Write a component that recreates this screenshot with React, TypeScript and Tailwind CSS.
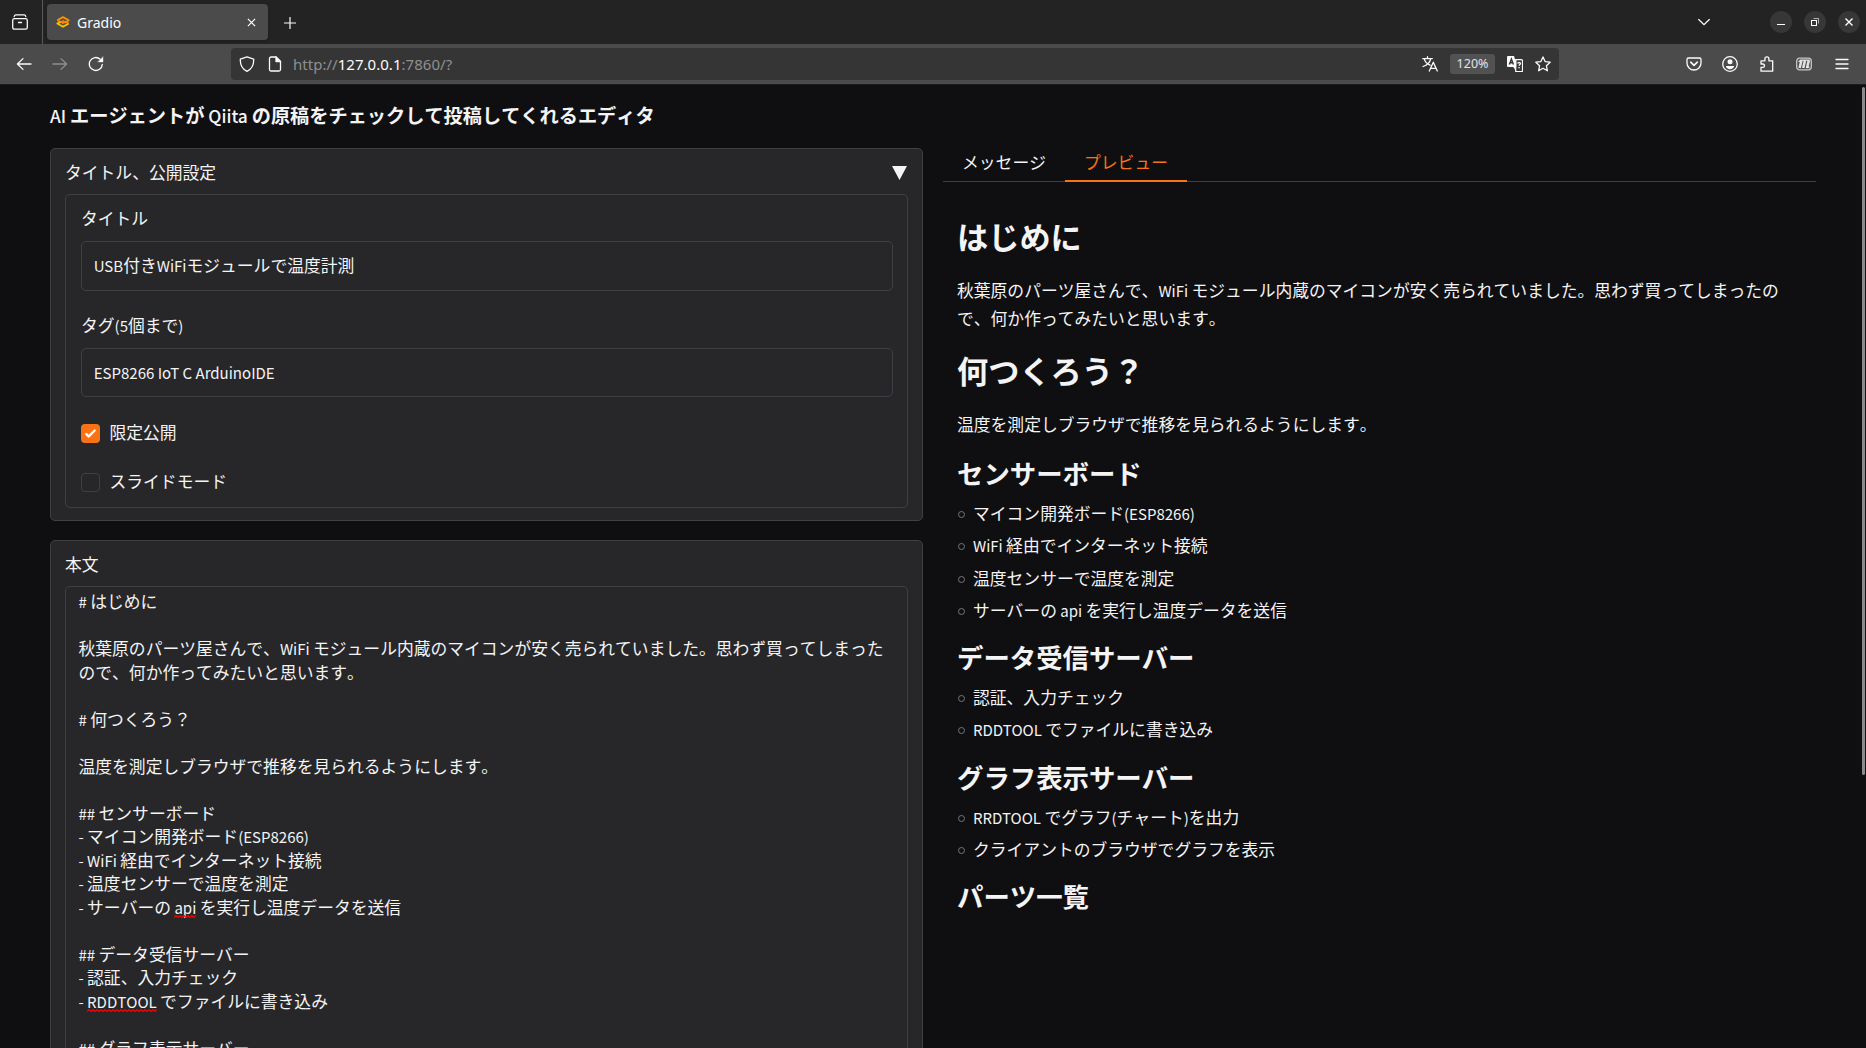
import React from "react";

type IconProps = { children: React.ReactNode; className?: string };

function Icon({ children, className = "" }: IconProps) {
  return (
    <svg
      viewBox="0 0 16 16"
      className={"size-4 shrink-0 " + className}
      fill="none"
      stroke="currentColor"
      strokeWidth="1.3"
      strokeLinecap="round"
      strokeLinejoin="round"
    >
      {children}
    </svg>
  );
}

/* Sets Latin runs slightly smaller than the Japanese text around them. */
function Mixed({ text, latin = "text-[0.895em]" }: { text: string; latin?: string }) {
  return (
    <>
      {text.split(/([ -~]+)/).map((run, i) =>
        i % 2 === 1 ? (
          <span key={i} className={"leading-none [font-kerning:normal] " + latin}>
            {run}
          </span>
        ) : (
          run
        ),
      )}
    </>
  );
}

function GradioLogo() {
  return (
    <svg viewBox="0 0 14 12" className="h-3 w-3.5 shrink-0" fill="none" strokeWidth="1.8" strokeLinejoin="round">
      <path d="M1.3 4.300 7 1.100l5.700 3.200L8.500 6.700" stroke="#ff9100" />
      <path d="M1.300 4.300 5 6.300 8.200 4.500" stroke="#ff7a00" />
      <path d="M12.700 7.500 7 10.800 1.300 7.500 4.800 5.700" stroke="#ffc000" />
      <path d="M12.700 7.500 9.400 5.700 6 7.400" stroke="#ff8a00" />
    </svg>
  );
}

function WindowButton({ children }: { children: React.ReactNode }) {
  return (
    <div className="flex size-[22px] items-center justify-center rounded-full bg-[#373737] text-white">
      <svg viewBox="0 0 10 10" className="size-2.5" fill="none" stroke="currentColor">
        {children}
      </svg>
    </div>
  );
}

function TabStrip() {
  return (
    <div className="flex h-11 items-center bg-[#232323] text-[#fbfbfe]">
      <div className="flex h-full w-[43px] items-center border-r border-[#5a5a5a] pl-3">
        <Icon>
          <path d="M2.200 2.500C2.400 1.200 3 .800 4 .800h8c1 0 1.600.4 1.800 1.700" />
          <rect x=".7" y="4.700" width="14.600" height="10.500" rx="1.800" />
          <path d="M6.500 8.500h3" />
        </Icon>
      </div>
      <div className="ml-1 flex h-9 w-[221px] items-center rounded bg-[#4b4b4b] pr-2.5 pl-[9px] shadow">
        <GradioLogo />
        <span className="ml-[7px] flex-1 text-[14px]">Gradio</span>
        <svg viewBox="0 0 10 10" className="mr-0.5 size-[9px]" stroke="currentColor" strokeWidth="1.400">
          <path d="M1 1l8 8M9 1l-8 8" />
        </svg>
      </div>
      <svg viewBox="0 0 12 12" className="ml-4 size-3 translate-y-px" stroke="currentColor" strokeWidth="1.200">
        <path d="M6 0v12M0 6h12" />
      </svg>
      <div className="flex-1" />
      <svg viewBox="0 0 12 8" className="mr-[60px] h-2 w-3" fill="none" stroke="currentColor" strokeWidth="1.300">
        <path d="M.4 1.200 6 6.600l5.600-5.400" />
      </svg>
      <div className="mr-[6px] flex gap-3">
        <WindowButton>
          <path d="M1 7.500h8" />
        </WindowButton>
        <WindowButton>
          <rect x="1.500" y="3.500" width="5" height="5" />
          <path d="M3.500 1.500h5v5" strokeOpacity=".6" />
        </WindowButton>
        <WindowButton>
          <path d="M1.500 1.500l7 7M8.500 1.500l-7 7" strokeWidth="1.400" />
        </WindowButton>
      </div>
    </div>
  );
}

function Toolbar() {
  return (
    <div className="flex h-[41px] items-center border-b border-[#1c1c1e] bg-[#4b4b4b] text-[#fbfbfe]">
      <Icon className="ml-4">
        <path d="M15 8H1.600M7 2.600 1.400 8 7 13.400" />
      </Icon>
      <Icon className="ml-5 text-[#8e8e90]">
        <path d="M1 8h13.400M9 2.600 14.600 8 9 13.400" />
      </Icon>
      <Icon className="ml-5">
        <path d="M14.300 8.400A6.500 6.500 0 1 1 12.200 3.200" />
        <path d="M15 1v4.900h-4.900z" fill="currentColor" strokeWidth=".4" />
      </Icon>
      <div className="ml-[127px] flex h-8 w-[1328px] items-center rounded bg-[#353535] px-2">
        <Icon>
          <path d="M8 .8 14.700 3.200C14.900 8.600 12.600 13 8 15.300 3.400 13 1.100 8.600 1.300 3.200z" />
        </Icon>
        <Icon className="ml-3">
          <path d="M4 1h5l4.500 4.500V13.500a1.500 1.500 0 0 1-1.500 1.500H4a1.500 1.500 0 0 1-1.500-1.500v-11A1.500 1.500 0 0 1 4 1z" />
          <path d="M9 1v4.500h4.500z" fill="currentColor" />
        </Icon>
        <span className="ml-[10px] flex-1 text-[15px] tracking-[0.030px] text-[#8f8f90]">
          http://<span className="text-[#fbfbfe]">127.0.0.1</span>:7860/?
        </span>
        <Icon>
          <path d="M.7 2.600h9.600M5.500.7v1.900M2.200 2.800c.8 3 3.300 5.200 5.800 6.400M8.700 2.800C8 6 5 9 1 10.500" />
          <path d="M7.300 15 11.300 6.200 15.300 15M8.700 12.300h5.200" />
        </Icon>
        <span className="ml-3 flex h-5 w-[45px] items-center justify-center rounded-[3px] bg-[#525252] text-[12.500px] text-[#e4e4e6]">
          120%
        </span>
        <svg viewBox="0 0 16 16" className="ml-3 size-4" fill="none" stroke="currentColor" strokeWidth="1.200">
          <path d="M1 0h6l1 3.300h1.500v8.200H6.500V11H1a1 1 0 0 1-1-1V1a1 1 0 0 1 1-1z" fill="currentColor" stroke="none" />
          <path d="M2.400 8.500 4.400 3l2 5.500M3 6.700h2.800" stroke="#353535" strokeWidth="1.400" />
          <path d="M8.500 3.700h6a1 1 0 0 1 1 1v10a1 1 0 0 1-1 1H8.700V11.500" />
          <path d="M6.300 10.500 8.700 15.300V10z" fill="currentColor" stroke="none" />
          <path d="M10.800 7.500c0-1.300 2.600-1.300 2.600 0 0 1-1.300 1-1.300 2.300M12.100 11v1.200" strokeWidth="1.400" />
        </svg>
        <Icon className="ml-3">
          <path d="M8 .9l2.100 4.700 5.100.6-3.800 3.500 1 5.100L8 12.300l-4.400 2.500 1-5.100L.8 6.200l5.100-.6z" />
        </Icon>
      </div>
      <div className="flex-1" />
      <div className="mr-4 flex items-center gap-5">
        <Icon>
          <path d="M2.500 2h11A1.500 1.500 0 0 1 15 3.500V7A7 7 0 0 1 1 7V3.500A1.500 1.500 0 0 1 2.500 2z" />
          <path d="M4.700 6.200 8 9.300l3.300-3.100" strokeWidth="1.600" />
        </Icon>
        <Icon>
          <circle cx="8" cy="8" r="7.300" />
          <circle cx="8" cy="5.800" r="2.500" fill="currentColor" stroke="none" />
          <path d="M3.800 10h8.400c-.3 2-2 3.200-4.200 3.200S4.100 12 3.800 10z" fill="currentColor" stroke="none" />
        </Icon>
        <Icon className="translate-x-px">
          <path d="M2 15.200V11.400h1.800a1.700 1.700 0 0 0 0-3.400H2V4.800h3.900V2.900a2 2 0 0 1 4 0v1.900h3.800v10.400z" />
        </Icon>
        <Icon className="ml-0.5">
          <rect x=".7" y="2.200" width="14.600" height="11.600" rx="3" strokeOpacity=".7" />
          <path
            d="M3.600 12 5.400 4.500M7.200 12 9 4.500M11 12 12.800 4.500"
            strokeWidth="2.600"
            strokeLinecap="butt"
            strokeOpacity=".85"
          />
          <path d="M2.900 5.400 4.600 4.200h8.600M10.800 11.800l2.400-.8" strokeWidth="1.200" strokeOpacity=".9" />
        </Icon>
        <Icon className="ml-0.5">
          <path d="M2 3.500h12M2 8h12M2 12.500h12" />
        </Icon>
      </div>
    </div>
  );
}

function Field({ label, value }: { label: string; value: string }) {
  return (
    <div className="flex flex-col gap-[11px]">
      <div className="h-6 leading-6">
        <Mixed text={label} />
      </div>
      <div className="h-[49.500px] rounded-[5px] border border-[#3f3f46] px-[11.700px] leading-[46px]">
        <Mixed text={value} />
      </div>
    </div>
  );
}

function Check({ label, checked }: { label: string; checked?: boolean }) {
  return (
    <div className="flex h-6 items-center gap-[9.500px]">
      {checked ? (
        <span className="flex size-[19px] items-center justify-center rounded bg-[#f97316]">
          <svg viewBox="0 0 16 16" className="size-[19px]" fill="white">
            <path d="M12.207 4.793a1 1 0 010 1.414l-5 5a1 1 0 01-1.414 0l-2-2a1 1 0 011.414-1.414L6.500 9.086l4.293-4.293a1 1 0 011.414 0z" />
          </svg>
        </span>
      ) : (
        <span className="size-[19px] rounded border border-[#3f3f46]" />
      )}
      <span>{label}</span>
    </div>
  );
}

/* A word with the spell checker's red zigzag laid under it. */
function Misspelt({ word }: { word: string }) {
  const points = Array.from({ length: 60 }, (_, i) => `${i * 2},${i % 2 === 0 ? 2.5 : 0.5}`).join(" ");
  return (
    <span className="relative inline-block text-[0.895em] leading-none">
      {word}
      <svg className="absolute inset-x-0 bottom-[-3px] h-[3px] w-full overflow-hidden" fill="none">
        <polyline points={points} stroke="#ff0000" strokeWidth="1.1" />
      </svg>
    </span>
  );
}

const panel = "rounded-[5px] border border-[#3f3f46] bg-[#27272a]";

function SettingsPanel() {
  return (
    <section className={panel + " h-[373px] px-3.5 pt-3"}>
      <div className="flex h-6 items-center justify-between">
        <span>タイトル、公開設定</span>
        <svg viewBox="0 0 15 14" className="mr-px h-3.5 w-[15px]" fill="#f4f4f5">
          <path d="M0 0h15L7.500 14z" />
        </svg>
      </div>
      <div className="mt-[9px] flex h-[314px] flex-col rounded-[5px] border border-[#3f3f46] pt-[11px] pr-[14px] pl-[15px]">
        <Field label="タイトル" value="USB付きWiFiモジュールで温度計測" />
        <div className="h-[22px]" />
        <Field label="タグ(5個まで)" value="ESP8266 IoT C ArduinoIDE" />
        <div className="mt-6 flex flex-col gap-[25px]">
          <Check label="限定公開" checked />
          <Check label="スライドモード" />
        </div>
      </div>
    </section>
  );
}

function BodyPanel() {
  return (
    <section className={panel + " mt-[19px] h-[700px] px-3.5 pt-[11px]"}>
      <div className="h-6 leading-6">本文</div>
      <div className="mt-[10px] h-[640px] rounded-[5px] border border-[#3f3f46] pt-[3px] pr-[11px] pl-[12.500px] leading-[23.520px] whitespace-pre-wrap">
        <Mixed
          text={
            "# はじめに\n\n秋葉原のパーツ屋さんで、WiFi モジュール内蔵のマイコンが安く売られていました。思わず買ってしまったので、何か作ってみたいと思います。\n\n# 何つくろう？\n\n温度を測定しブラウザで推移を見られるようにします。\n\n## センサーボード\n- マイコン開発ボード(ESP8266)\n- WiFi 経由でインターネット接続\n- 温度センサーで温度を測定\n- サーバーの "
          }
        />
        <Misspelt word="api" />
        <Mixed text={" を実行し温度データを送信\n\n## データ受信サーバー\n- 認証、入力チェック\n- "} />
        <Misspelt word="RDDTOOL" />
        <Mixed text={" でファイルに書き込み\n\n## グラフ表示サーバー"} />
      </div>
    </section>
  );
}

function H2({ children }: { children: React.ReactNode }) {
  return <h2 className="mt-[12.500px] mb-[6.300px] h-9 text-[26.400px] leading-9 font-bold">{children}</h2>;
}

function List({ items }: { items: string[] }) {
  return (
    <ul>
      {items.map((t) => (
        <li key={t} className="flex h-[32.350px] items-center">
          <span className="mr-2 ml-px size-[7px] translate-y-px rounded-full border border-[#77777c]" />
          <span className="whitespace-pre">
            <Mixed text={t} />
          </span>
        </li>
      ))}
    </ul>
  );
}

function Preview() {
  return (
    <div className="w-[873px]">
      <div className="flex h-[34px] border-b border-[#3f3f46]">
        <div className="h-[34px] w-[122px] text-center leading-[28px]">メッセージ</div>
        <div className="h-[34px] w-[122px] border-b-2 border-[#f97316] text-center leading-[28px] text-[#f97316]">
          プレビュー
        </div>
      </div>
      <article className="pt-[34px] pr-[15px] pl-3.5">
        <h1 className="h-10 text-[31.200px] leading-10 font-bold">はじめに</h1>
        <p className="mt-5 leading-7">
          <Mixed text="秋葉原のパーツ屋さんで、WiFi モジュール内蔵のマイコンが安く売られていました。思わず買ってしまったので、何か作ってみたいと思います。" />
        </p>
        <h1 className="mt-[18px] h-10 text-[31.200px] leading-10 font-bold">何つくろう？</h1>
        <p className="mt-5 mb-[17px] leading-7">温度を測定しブラウザで推移を見られるようにします。</p>
        <H2>センサーボード</H2>
        <List
          items={[
            "マイコン開発ボード(ESP8266)",
            "WiFi 経由でインターネット接続",
            "温度センサーで温度を測定",
            "サーバーの api を実行し温度データを送信",
          ]}
        />
        <H2>データ受信サーバー</H2>
        <List items={["認証、入力チェック", "RDDTOOL でファイルに書き込み"]} />
        <H2>グラフ表示サーバー</H2>
        <List items={["RRDTOOL でグラフ(チャート)を出力", "クライアントのブラウザでグラフを表示"]} />
        <H2>パーツ一覧</H2>
      </article>
    </div>
  );
}

export default function App() {
  return (
    <div className="flex h-[1048px] w-[1866px] flex-col overflow-hidden bg-[#0f0f11]">
      <div className="font-['Noto_Sans','Noto_Sans_CJK_JP',sans-serif]">
        <TabStrip />
        <Toolbar />
      </div>
      <main
        lang="ja"
        className="flex min-h-0 flex-1 justify-between overflow-hidden pl-[50px] font-['Noto_Sans_CJK_JP',sans-serif] text-[16.800px] text-[#f4f4f5] [font-kerning:none]"
      >
        <div className="w-[1766px] shrink-0">
          <h3 className="mt-4 h-7 text-[19.200px] leading-7 font-bold">
            <Mixed
              text="AI エージェントが Qiita の原稿をチェックして投稿してくれるエディタ"
              latin="text-[0.905em] font-medium"
            />
          </h3>
          <div className="mt-[19px] flex gap-5">
            <div className="w-[873px]">
              <SettingsPanel />
              <BodyPanel />
            </div>
            <Preview />
          </div>
        </div>
        <div className="mt-0.5 mr-px h-[688px] w-[3px] rounded-sm bg-[#8b8b8b]" />
      </main>
    </div>
  );
}
